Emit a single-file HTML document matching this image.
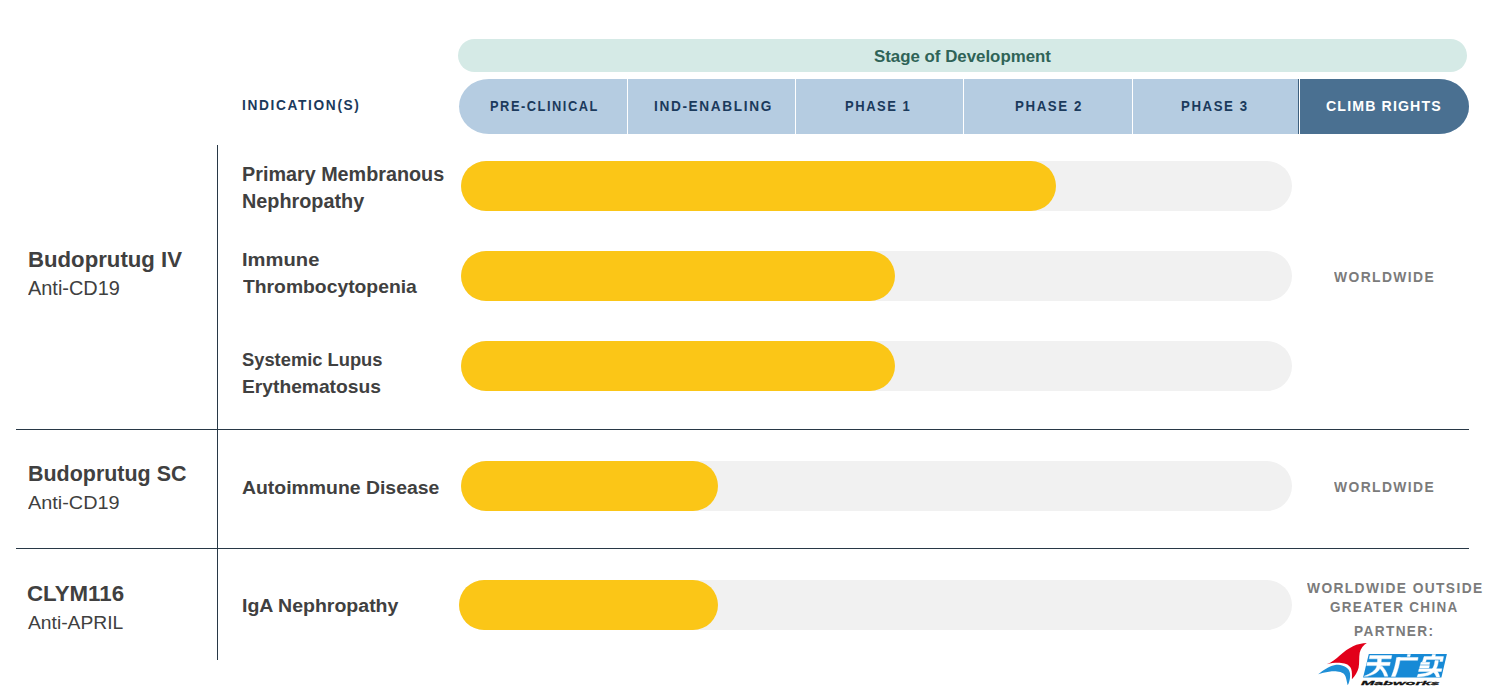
<!DOCTYPE html>
<html><head><meta charset="utf-8"><title>Pipeline</title>
<style>
html,body{margin:0;padding:0;background:#fff;}
body{width:1486px;height:697px;position:relative;overflow:hidden;font-family:"Liberation Sans",sans-serif;}
.a{position:absolute;}
.t{position:absolute;white-space:nowrap;transform-origin:0 0;font-family:"Liberation Sans",sans-serif;}
.bar{position:absolute;height:50px;border-radius:25px;}
</style></head><body>

<div class="a" style="left:458px;top:39px;width:1009px;height:33px;border-radius:16.5px;background:#d5eae6"></div>
<div class="a" style="left:459px;top:79px;width:1010px;height:55px;border-radius:30px / 27.5px;background:#b5cce1;overflow:hidden"><div class="a" style="left:840px;top:0;width:170px;height:55px;background:#4a7091"></div><div class="a" style="left:168px;top:0;width:1px;height:55px;background:#fff"></div><div class="a" style="left:336px;top:0;width:1px;height:55px;background:#fff"></div><div class="a" style="left:504px;top:0;width:1px;height:55px;background:#fff"></div><div class="a" style="left:673px;top:0;width:1px;height:55px;background:#fff"></div><div class="a" style="left:840px;top:0;width:1px;height:55px;background:#fff"></div><div class="a" style="left:839px;top:0;width:1px;height:55px;background:#3d5f7e"></div></div>
<div class="a" style="left:217px;top:145px;width:1px;height:515px;background:#283846"></div>
<div class="a" style="left:16px;top:429px;width:1453px;height:1px;background:#283846"></div>
<div class="a" style="left:16px;top:548px;width:1453px;height:1px;background:#283846"></div>
<div class="bar" style="left:461px;top:161px;width:831px;background:#f1f1f1"></div>
<div class="bar" style="left:461px;top:161px;width:595px;background:#fbc617"></div>
<div class="bar" style="left:461px;top:251px;width:831px;background:#f1f1f1"></div>
<div class="bar" style="left:461px;top:251px;width:434px;background:#fbc617"></div>
<div class="bar" style="left:461px;top:341px;width:831px;background:#f1f1f1"></div>
<div class="bar" style="left:461px;top:341px;width:434px;background:#fbc617"></div>
<div class="bar" style="left:461px;top:461px;width:831px;background:#f1f1f1"></div>
<div class="bar" style="left:461px;top:461px;width:257px;background:#fbc617"></div>
<div class="bar" style="left:459px;top:580px;width:833px;background:#f1f1f1"></div>
<div class="bar" style="left:459px;top:580px;width:259px;background:#fbc617"></div>
<div class="t" style="left:873.98px;top:49.26px;font-size:16.522px;line-height:16.522px;font-weight:700;color:#2f6357;letter-spacing:0em;transform:scaleX(1.0203)">Stage of Development</div>
<div class="t" style="left:242.00px;top:98.55px;font-size:13.768px;line-height:13.768px;font-weight:700;color:#1b3a5c;letter-spacing:0.12em;transform:scaleX(0.9966)">INDICATION(S)</div>
<div class="t" style="left:490.38px;top:99.97px;font-size:13.913px;line-height:13.913px;font-weight:700;color:#1b3a5c;letter-spacing:0.12em;transform:scaleX(0.9217)">PRE-CLINICAL</div>
<div class="t" style="left:653.62px;top:99.97px;font-size:13.913px;line-height:13.913px;font-weight:700;color:#1b3a5c;letter-spacing:0.12em;transform:scaleX(0.9814)">IND-ENABLING</div>
<div class="t" style="left:844.97px;top:99.97px;font-size:13.913px;line-height:13.913px;font-weight:700;color:#1b3a5c;letter-spacing:0.12em;transform:scaleX(0.9324)">PHASE 1</div>
<div class="t" style="left:1014.54px;top:99.97px;font-size:13.913px;line-height:13.913px;font-weight:700;color:#1b3a5c;letter-spacing:0.12em;transform:scaleX(0.9559)">PHASE 2</div>
<div class="t" style="left:1181.05px;top:99.97px;font-size:13.913px;line-height:13.913px;font-weight:700;color:#1b3a5c;letter-spacing:0.12em;transform:scaleX(0.9515)">PHASE 3</div>
<div class="t" style="left:1325.58px;top:99.97px;font-size:13.913px;line-height:13.913px;font-weight:700;color:#ffffff;letter-spacing:0.08em;transform:scaleX(1.0180)">CLIMB RIGHTS</div>
<div class="t" style="left:242.01px;top:163.80px;font-size:20.000px;line-height:20.000px;font-weight:700;color:#404040;letter-spacing:0em;transform:scaleX(0.9887)">Primary Membranous</div>
<div class="t" style="left:242.00px;top:191.67px;font-size:19.855px;line-height:19.855px;font-weight:700;color:#404040;letter-spacing:0em;transform:scaleX(0.9983)">Nephropathy</div>
<div class="t" style="left:241.95px;top:249.72px;font-size:19.275px;line-height:19.275px;font-weight:700;color:#404040;letter-spacing:0em;transform:scaleX(1.0472)">Immune</div>
<div class="t" style="left:243.00px;top:277.07px;font-size:19.275px;line-height:19.275px;font-weight:700;color:#404040;letter-spacing:0em;transform:scaleX(1.0023)">Thrombocytopenia</div>
<div class="t" style="left:242.05px;top:349.82px;font-size:19.275px;line-height:19.275px;font-weight:700;color:#404040;letter-spacing:0em;transform:scaleX(0.9507)">Systemic Lupus</div>
<div class="t" style="left:242.00px;top:376.52px;font-size:19.275px;line-height:19.275px;font-weight:700;color:#404040;letter-spacing:0em;transform:scaleX(0.9978)">Erythematosus</div>
<div class="t" style="left:241.96px;top:479.16px;font-size:18.696px;line-height:18.696px;font-weight:700;color:#404040;letter-spacing:0em;transform:scaleX(1.0381)">Autoimmune Disease</div>
<div class="t" style="left:241.96px;top:596.96px;font-size:18.696px;line-height:18.696px;font-weight:700;color:#404040;letter-spacing:0em;transform:scaleX(1.0436)">IgA Nephropathy</div>
<div class="t" style="left:27.53px;top:247.94px;font-size:22.899px;line-height:22.899px;font-weight:700;color:#404040;letter-spacing:0em;transform:scaleX(0.9696)">Budoprutug IV</div>
<div class="t" style="left:28.00px;top:279.02px;font-size:19.565px;line-height:19.565px;font-weight:400;color:#404040;letter-spacing:0em;transform:scaleX(1.0191)">Anti-CD19</div>
<div class="t" style="left:27.53px;top:463.00px;font-size:22.174px;line-height:22.174px;font-weight:700;color:#404040;letter-spacing:0em;transform:scaleX(0.9679)">Budoprutug SC</div>
<div class="t" style="left:28.00px;top:492.52px;font-size:19.275px;line-height:19.275px;font-weight:400;color:#404040;letter-spacing:0em;transform:scaleX(1.0307)">Anti-CD19</div>
<div class="t" style="left:26.99px;top:583.00px;font-size:22.174px;line-height:22.174px;font-weight:700;color:#404040;letter-spacing:0em;transform:scaleX(1.0063)">CLYM116</div>
<div class="t" style="left:28.00px;top:612.52px;font-size:19.275px;line-height:19.275px;font-weight:400;color:#404040;letter-spacing:0em;transform:scaleX(1.0000)">Anti-APRIL</div>
<div class="t" style="left:1333.80px;top:269.76px;font-size:14.638px;line-height:14.638px;font-weight:700;color:#7b7b7b;letter-spacing:0.1em;transform:scaleX(0.9476)">WORLDWIDE</div>
<div class="t" style="left:1333.80px;top:479.76px;font-size:14.638px;line-height:14.638px;font-weight:700;color:#7b7b7b;letter-spacing:0.1em;transform:scaleX(0.9476)">WORLDWIDE</div>
<div class="t" style="left:1306.90px;top:581.33px;font-size:14.783px;line-height:14.783px;font-weight:700;color:#7b7b7b;letter-spacing:0.1em;transform:scaleX(0.9332)">WORLDWIDE OUTSIDE</div>
<div class="t" style="left:1329.87px;top:599.68px;font-size:14.493px;line-height:14.493px;font-weight:700;color:#7b7b7b;letter-spacing:0.1em;transform:scaleX(0.9287)">GREATER CHINA</div>
<div class="t" style="left:1354.02px;top:625.17px;font-size:13.913px;line-height:13.913px;font-weight:700;color:#7b7b7b;letter-spacing:0.1em;transform:scaleX(0.9823)">PARTNER:</div>
<svg class="logo" style="position:absolute;left:1310px;top:636px" width="145" height="56" viewBox="0 0 145 56">
<path d="M56.8,7.1 C52,7.3 47.5,8.3 43,10.2 C38,12.6 34,15.6 30,19.2 C26,23 21.5,26.5 16.6,28.3 C22,26.8 27,26.6 31.2,26.9 C35.8,27.3 39.8,28.8 41.2,32.9 C42.1,35.6 42,39.5 41.9,43.2 C45,40 47.4,36.5 48.6,31.8 C49.6,27 48.8,21.5 49.7,16.8 C50.6,12.5 53.5,9 56.8,7.1 Z" fill="#e2001a"/>
<path d="M8.2,38.3 C11,36 13,34.5 16,32.8 C19,31 21.5,29.8 24.1,29.2 C27,28.7 30,28.7 32,29.4 C35,30.2 37.5,31.6 38.7,33.8 C40,36 40.3,38 40.1,40.5 C39.9,44 39,47 37.7,49.3 C37.2,47.5 36.9,46 36.6,44.6 C36.2,42 35.5,39.5 33.5,37.5 C31.5,36 29.5,35.6 27,35.4 C24,35.3 21.5,35.4 19,35.7 C15,36.3 11.5,37.2 8.2,38.3 Z" fill="#1f8fd6"/>
<path d="M58.8,18.1 L136.9,18.1 L131.4,41.6 L53.1,41.6 Z" fill="#178ad6"/>
<g fill="#fff" stroke="#fff" stroke-width="0.45" stroke-linejoin="round">
<path d="M59.9,19.5 L81.7,19.5 L81.1,22.8 L59.3,22.8 Z"/>
<path d="M57.3,26.3 L80.3,26.3 L79.6,29.6 L56.7,29.6 Z"/>
<path d="M67.6,22.5 L71.4,22.5 C71.2,26 71,29 70.3,31.5 C68.8,36 64,38.6 57.2,40.3 L54.2,40.3 C60.5,37.8 65,35 66.6,31 C67.4,28.5 67.6,25.5 67.6,22.5 Z"/>
<path d="M68.9,31.4 L71.8,29.9 C74.6,32.8 76.6,35.6 77.9,40.3 L74.5,40.3 C73.3,36.2 71.6,33.6 68.9,31.4 Z"/>
<path d="M97.6,18.4 L100.4,18.4 L100,20.4 L97.2,20.4 Z"/>
<path d="M88.1,21.5 L108.1,21.5 L107.6,24.3 L87.5,24.3 Z"/>
<path d="M86.6,21.6 L90.3,21.6 C89.7,27.5 88,34.5 85.3,40.6 L81.4,40.6 C84,34.5 85.8,27.5 86.6,21.6 Z"/>
<path d="M122.3,18.5 L125.5,18.5 L125,20.9 L121.8,20.9 Z"/>
<path d="M114.1,20.6 L133.5,20.6 L132.6,25.4 L129.8,25.4 L130.3,23.4 L116.4,23.4 L115.6,25.9 L112.4,25.9 Z"/>
<path d="M111,26.3 L119.8,26.3 L119.3,28.6 L110.5,28.6 Z"/>
<path d="M110.1,29.6 L119.4,29.6 L118.9,31.9 L109.6,31.9 Z"/>
<path d="M109.1,32.8 L131.9,32.8 L131.3,35.5 L108.5,35.5 Z"/>
<path d="M125,24.6 L128.4,24.6 C127.9,30 126,35.2 121.2,38 C118.6,39.6 114.8,40.4 107.2,40.9 L108,38.3 C114.3,37.8 117.6,37 119.8,35.6 C123,33.4 124.6,29.4 125,24.6 Z"/>
<path d="M123.2,36 L126.4,34.6 C128.2,36.4 129.2,38.2 129.6,40.9 L126.4,40.9 C125.6,38.8 124.7,37.4 123.2,36 Z"/>
</g>
<g transform="translate(51,48.6) scale(1,0.72)">
<text x="0" y="0" font-family="Liberation Sans" font-weight="bold" font-style="italic" font-size="8.6" textLength="78.5" lengthAdjust="spacingAndGlyphs" fill="#111" stroke="#111" stroke-width="0.35">Mabworks</text>
</g>
</svg>

</body></html>
